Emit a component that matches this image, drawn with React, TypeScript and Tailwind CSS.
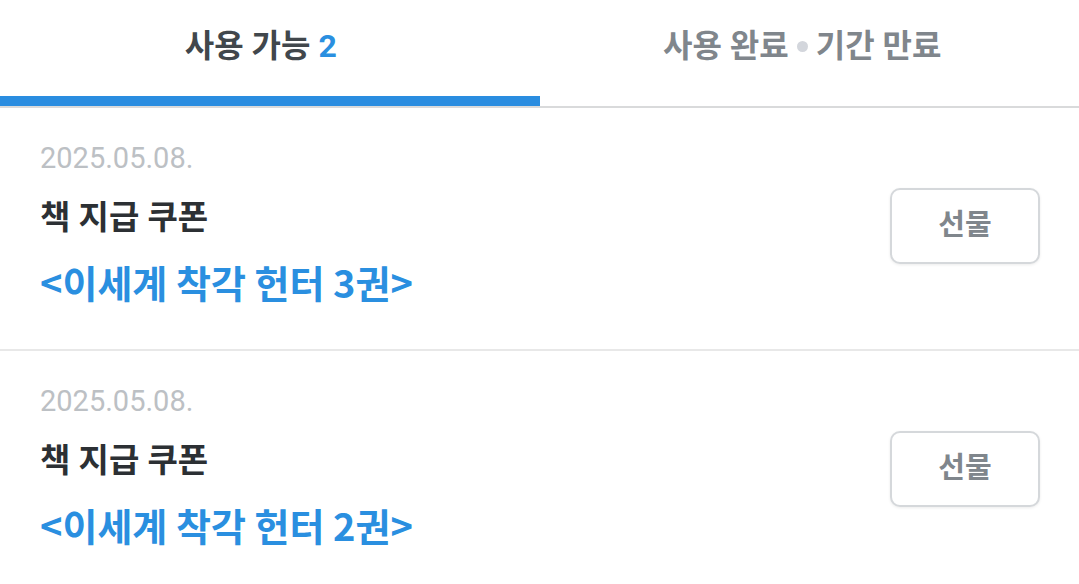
import React from "react";

const FONT = { fontFamily: "Roboto, 'Noto Sans CJK KR', sans-serif" };
const CJK = { fontFamily: "'Noto Sans CJK KR', Roboto, sans-serif" };

function Coupon({ title }: { title: string }) {
  return (
    <div className="flex items-center justify-between pl-[40px] pr-[39px] pt-[30px] pb-[45px] border-b-2 border-[#e8e8e8]">
      <div className="flex flex-col">
        <div className="text-[29px] leading-[40px] text-[#bcc0c4]">2025.05.08.</div>
        <div className="mt-[18px] text-[33px] leading-[44px] font-bold text-[#2c3034]">책 지급 쿠폰</div>
        <div className="mt-[20px] text-[38px] leading-[44px] font-bold text-[#2a8fe0]" style={CJK}>
          {title}
        </div>
      </div>
      <button className="mt-[9px] w-[150px] h-[76px] rounded-[10px] border-2 border-[#d5d8db] bg-white shadow-[0_1px_3px_rgba(0,0,0,0.08)] text-[29px] font-bold text-[#80868c]">
        선물
      </button>
    </div>
  );
}

export default function App() {
  return (
    <div className="w-[1079px] h-[584px] bg-white overflow-hidden" style={FONT}>
      <div className="grid grid-cols-2 border-b-2 border-[#d9dadb]">
        <div className="h-[106px] flex flex-col">
          <div className="flex-1 flex items-center justify-center text-[32px] font-bold text-[#41474c] pb-[4px] pr-[18px]">
            사용 가능 <span className="ml-[8px] text-[#2a8fe0]">2</span>
          </div>
          <div className="h-[10px] bg-[#2a8de0]" />
        </div>
        <div className="h-[106px] flex items-center justify-center text-[32px] font-bold text-[#80868c] pb-[14px] pr-[14px]">
          사용 완료
          <span className="mx-[8px] w-[11px] h-[11px] rounded-full bg-[#d3d6dc] inline-block" />
          기간 만료
        </div>
      </div>
      <Coupon title="<이세계 착각 헌터 3권>" />
      <Coupon title="<이세계 착각 헌터 2권>" />
    </div>
  );
}
